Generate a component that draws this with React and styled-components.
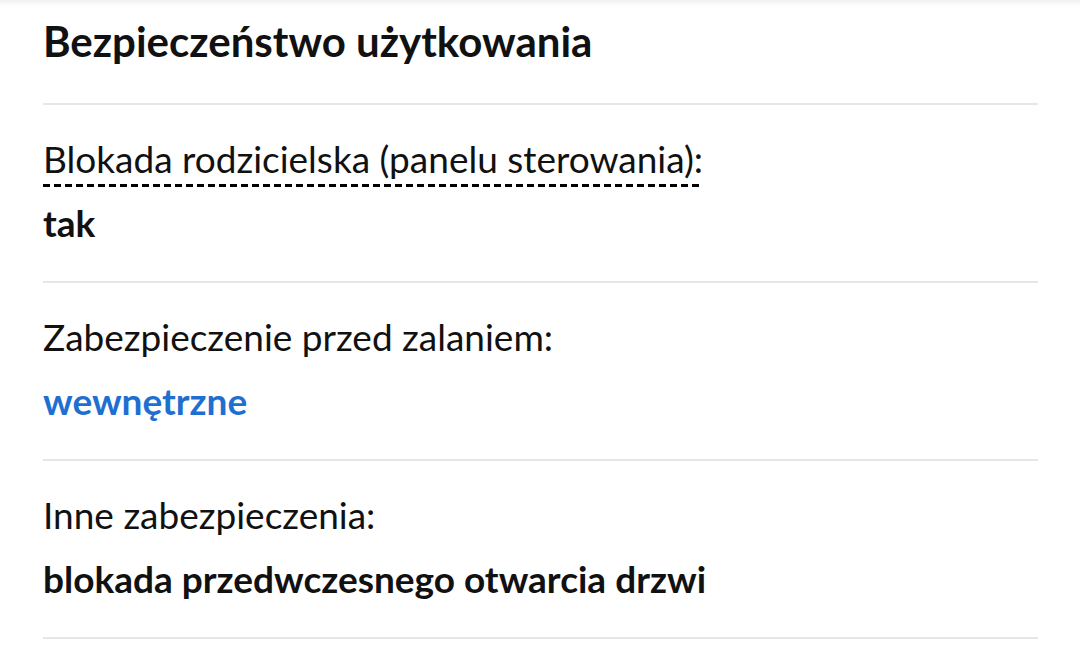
import React from 'react';
import styled, { createGlobalStyle } from 'styled-components';

const GlobalStyle = createGlobalStyle`
    html, body {
        margin: 0;
        padding: 0;
        background: #ffffff;
    }
    body {
        font-family: Lato, "Noto Sans", sans-serif;
        color: #111111;
    }
`;

const Card = styled.div`
    width: 1080px;
    height: 656px;
    overflow: hidden;
    padding: 0 42px 0 43px;
    box-sizing: border-box;
    background: #ffffff;
    box-shadow: inset 0 10px 10px -10px rgba(0, 0, 0, 0.12);
`;

const Title = styled.h2`
    margin: 0;
    padding: 16px 0 37px;
    font-size: 42px;
    line-height: 50px;
    font-weight: 700;
    color: #111111;
    border-bottom: 2px solid #e6e6e6;
`;

const Row = styled.div`
    display: flex;
    flex-direction: column;
    gap: 18px;
    padding: 31px 0 35px;
    border-bottom: 2px solid #e6e6e6;
`;

const Label = styled.div`
    font-size: 37px;
    line-height: 46px;
    font-weight: 400;
    color: #111111;
`;

const Hint = styled.span`
    padding-bottom: 6px;
    background-image: linear-gradient(to right, #000000 0 7px, transparent 7px 11px);
    background-size: 11px 3px;
    background-repeat: repeat-x;
    background-position: left bottom;
`;

const Value = styled.div`
    font-size: 37px;
    line-height: 46px;
    font-weight: 700;
    color: ${props => props.$link ? '#1f6fd1' : '#111111'};
`;

const rows = [
    { label: 'Blokada rodzicielska (panelu sterowania):', value: 'tak', hint: true },
    { label: 'Zabezpieczenie przed zalaniem:', value: 'wewnętrzne', link: true },
    { label: 'Inne zabezpieczenia:', value: 'blokada przedwczesnego otwarcia drzwi' },
];

export default function App() {
    return (
        <Card>
            <GlobalStyle />
            <Title>Bezpieczeństwo użytkowania</Title>
            {rows.map(row => (
                <Row key={row.label}>
                    <Label>
                        {row.hint ? <Hint>{row.label}</Hint> : row.label}
                    </Label>
                    <Value $link={row.link}>{row.value}</Value>
                </Row>
            ))}
        </Card>
    );
}
